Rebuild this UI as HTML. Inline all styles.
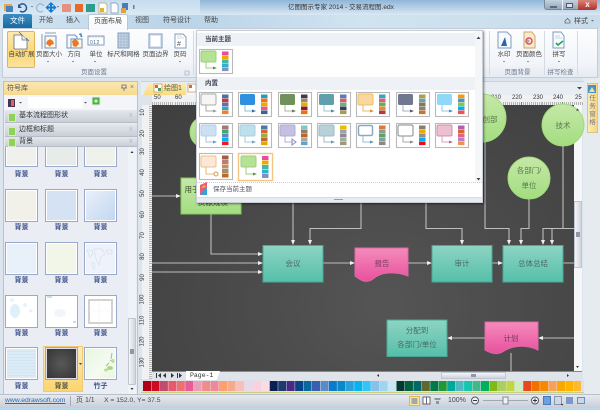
<!DOCTYPE html>
<html lang="zh">
<head>
<meta charset="utf-8">
<title>亿图图示专家 2014</title>
<style>
html,body{margin:0;padding:0;width:600px;height:410px;overflow:hidden;background:#d9e3ee}
#r{position:relative;width:600px;height:410px;overflow:hidden;font-family:"Liberation Sans","Noto Sans CJK SC",sans-serif;font-size:7px;color:#444;filter:blur(.35px)}
#r div,#r span.a{position:absolute;box-sizing:border-box}
.t{white-space:nowrap;line-height:9px;text-align:center}
.lb{color:#3f5288;font-size:7px;width:33px;text-align:center;line-height:9px;white-space:nowrap;font-weight:bold}
.th{width:33px;height:33px;border:1px solid #9aa9c9;box-shadow:inset 0 0 0 1px #fff}
.gb{left:5px;width:132px;height:13px;background:linear-gradient(#e4e7ec,#c9ced8);border-bottom:1px solid #b5bcc8;line-height:12px;padding-left:14px;font-size:7px;color:#333;white-space:nowrap}
.gb i{position:absolute;left:3px;top:3px;width:6px;height:7px;background:#8ed25a;border:1px solid #d8e8c8}
.gb b{position:absolute;left:124px;top:0;color:#b4bac4;font-weight:normal}
.hd{left:197px;width:278px;height:13px;background:#eef1f5;line-height:13px;padding-left:8px;font-size:6.500px;color:#445;font-weight:bold}
svg{position:absolute;left:0;top:0}
svg text{font-family:"Liberation Sans","Noto Sans CJK SC",sans-serif}
</style>
</head>
<body>
<div id="r">
<!-- window chrome -->
<div style="left:0;top:0;width:600px;height:28px;background:linear-gradient(90deg,#d4e5f3 0,#b9d3e8 30%,#d0e3f0 60%,#c9dcec 100%)"></div>
<div style="left:200px;top:0;width:400px;height:15px;background:linear-gradient(#8fb6d8,#dbe9f4)"></div>
<div style="left:0;top:0;width:200px;height:15px;background:linear-gradient(#c6dcee,#dbe9f4)"></div>
<div class="t" style="left:288px;top:3px;color:#333;font-size:6.500px">亿图图示专家 2014 - 交易流程图.edx</div>
<div style="left:544px;top:0;width:53px;height:10px;border-radius:0 0 3px 3px;background:linear-gradient(#c4d2de,#93a8b9);border:1px solid #77899a;border-top:0"></div>
<div style="left:562px;top:0;width:1px;height:10px;background:#eef"></div>
<div style="left:578px;top:0;width:19px;height:10px;border-radius:0 0 3px 0;background:linear-gradient(#d9847a,#b03028)"></div>
<div style="left:550px;top:6px;width:7px;height:2px;background:#eef;border:1px solid #667"></div>
<div style="left:566px;top:3px;width:7px;height:5px;border:1px solid #556;background:#dde"></div>
<div class="t" style="left:578px;top:0;width:19px;color:#fff;font-weight:bold;font-size:8px">x</div>
<!-- qat icons -->
<svg width="600" height="410" style="z-index:1">
<rect x="4" y="4" width="8" height="7" fill="#e8a848"/><rect x="6" y="6" width="7" height="6" fill="#4a80c0"/>
<path d="M19 6a4 4 0 1 1 1 5" fill="none" stroke="#2a5a98" stroke-width="1.600"/><path d="M18 4v4h4z" fill="#2a5a98"/>
<path d="M31 6l2 0-1 1.500z" fill="#667"/>
<path d="M44 6a4 4 0 1 0-1 5" fill="none" stroke="#a8bccf" stroke-width="1.500"/>
<path d="M51 4l3 3h-2v1.500h1.500V6.500l3 3-3 3V10.500H52V12h2l-3 3-3-3h2v-1.500H48.500v2l-3-3 3-3v2H50V7h-2z" fill="#1878c8" transform="translate(0,-2)"/>
<path d="M57 6l2 0-1 1.500z" fill="#667"/>
<rect x="62" y="4" width="9" height="8" fill="#e89080"/><rect x="75" y="4" width="8" height="8" fill="#e86828"/><rect x="86" y="4" width="9" height="8" fill="#2f9b8c"/>
<path d="M99 3h6l2 2v8h-8z" fill="#fff" stroke="#b8a060" stroke-width=".7"/><rect x="100" y="8" width="4" height="4" fill="#e8b030"/>
<path d="M111 3h5l2 2v8h-7z" fill="#fff" stroke="#7090b8" stroke-width=".7"/>
<path d="M122 3h6v7h-6z" fill="#4080c0"/><path d="M121 8h5v5h-5z" fill="#e8a030"/>
<rect x="133" y="5" width="1.500" height="4" fill="#778"/>
</svg>
<!-- tabs -->
<div style="left:3px;top:14px;width:29px;height:14px;background:linear-gradient(#3a8ec4,#1a6aa0);border-radius:2px 2px 0 0;color:#fff;text-align:center;line-height:13px;font-size:7.500px">文件</div>
<div class="t" style="left:39px;top:16px">开始</div>
<div class="t" style="left:66px;top:16px">插入</div>
<div style="left:88px;top:14px;width:40px;height:16px;background:linear-gradient(#fff,#f6f8fb);border:1px solid #b9c6d4;border-bottom:0;border-radius:2px 2px 0 0;z-index:2;text-align:center;line-height:14px;color:#444">页面布局</div>
<div class="t" style="left:135px;top:16px">视图</div>
<div class="t" style="left:163px;top:16px">符号设计</div>
<div class="t" style="left:204px;top:16px">帮助</div>
<div class="t" style="left:574px;top:17px">样式</div>
<svg width="600" height="410" style="z-index:2"><path d="M565 21l2.500-2.500 2.500 2.500v2h-5z" fill="none" stroke="#667" stroke-width=".8"/><path d="M591 20h3l-1.500 1.500z" fill="#667"/></svg>
<!-- ribbon -->
<div style="left:2px;top:28px;width:596px;height:50px;background:linear-gradient(#fdfdfe,#f2f5f9 70%,#e6ebf1);border:1px solid #c4ced9"></div>
<div style="left:7px;top:31px;width:28px;height:37px;background:linear-gradient(#fde9ae,#fcd677 60%,#fbe39c);border:1px solid #dcb45a;border-radius:2px"></div>
<div class="t" style="left:8px;top:50px;width:27px;font-size:6.500px">自动扩展</div>
<div class="t" style="left:35px;top:50px;width:28px;font-size:6.500px">页面大小</div>
<div class="t" style="left:66px;top:50px;width:16px;font-size:6.500px">方向</div>
<div class="t" style="left:88px;top:50px;width:16px;font-size:6.500px">单位</div>
<div class="t" style="left:107px;top:50px;width:33px;font-size:6.500px">标尺和网格</div>
<div class="t" style="left:142px;top:50px;width:27px;font-size:6.500px">页面边界</div>
<div class="t" style="left:172px;top:50px;width:16px;font-size:6.500px">页码</div>
<div class="t" style="left:81px;top:68px;width:26px;font-size:6.500px;color:#6b7b8f">页面设置</div>
<div class="t" style="left:496px;top:50px;width:16px;font-size:6.500px">水印</div>
<div class="t" style="left:515px;top:50px;width:28px;font-size:6.500px">页面颜色</div>
<div class="t" style="left:551px;top:50px;width:16px;font-size:6.500px">拼写</div>
<div class="t" style="left:504px;top:68px;width:27px;font-size:6.500px;color:#6b7b8f">页面背景</div>
<div class="t" style="left:547px;top:68px;width:27px;font-size:6.500px;color:#6b7b8f">拼写检查</div>
<div style="left:193px;top:31px;width:1px;height:44px;background:#d5dbe3"></div>
<div style="left:489px;top:31px;width:1px;height:44px;background:#d5dbe3"></div>
<div style="left:544px;top:31px;width:1px;height:44px;background:#d5dbe3"></div>
<div style="left:577px;top:31px;width:1px;height:44px;background:#d5dbe3"></div>
<svg width="600" height="410" style="z-index:2">
<!-- auto expand -->
<path d="M14 35h8l5 5v9h-13z" fill="#fff" stroke="#606c7c" stroke-width=".8"/><path d="M22 35v5h5" fill="#e8eef4" stroke="#606c7c" stroke-width=".7"/><path d="M19 32l3 3M26 38l3 3" stroke="#3c6aa0" stroke-width=".8"/>
<!-- page size -->
<path d="M45 36h11v12h-11z" fill="#fdf6ec" stroke="#6f93bd"/><path d="M47 41l3-2 3 2 1 3-3 1-1 2-2-2-2-1z" fill="#e8792a"/><path d="M42 34v15M45 33h11" stroke="#5f7fa8" stroke-width=".8"/>
<!-- orientation -->
<path d="M67 35h8l2 2v11h-10z" fill="#f5f8fc" stroke="#6f93bd"/><rect x="71" y="39" width="11" height="9" fill="#fdf3e6" stroke="#6f93bd"/><path d="M72 41l3-2 3 2 1 3-3 3-3-1z" fill="#e8792a"/><path d="M79 34a4 4 0 0 1 3 3M81 33v4" stroke="#4078b0" fill="none"/>
<!-- unit -->
<rect x="88" y="36" width="16" height="9" fill="#fff" stroke="#7f9cbf"/><path d="M90 36v2M93 36v2M96 36v2M99 36v2M102 36v2" stroke="#7f9cbf" stroke-width=".6"/>
<text x="90" y="44" font-size="5" fill="#46668c" letter-spacing=".5">012</text>
<!-- grid -->
<rect x="118" y="33" width="11" height="15" fill="#c8d6e6" stroke="#7f9cbf"/><path d="M118 36h11M118 39h11M118 42h11M118 45h11M121 33v15M124 33v15M127 33v15" stroke="#8fa8c4" stroke-width=".5"/>
<!-- border -->
<rect x="149" y="34" width="13" height="14" fill="#dbe6f2" stroke="#7f9cbf"/><rect x="151" y="36" width="9" height="10" fill="#fff"/>
<!-- page no -->
<path d="M175 34h8l3 3v11h-11z" fill="#fff" stroke="#7f9cbf"/><path d="M177 36h5M177 38h7" stroke="#a8b8cc" stroke-width=".6"/><text x="177" y="46" font-size="7" fill="#456">#</text>
<!-- arrows -->
<path d="M47 61h2l-1 1.200zM72 61h2l-1 1.200zM94 61h2l-1 1.200zM179 61h2l-1 1.200zM503 61h2l-1 1.200zM527 61h2l-1 1.200zM558 61h2l-1 1.200z" fill="#555"/>
<path d="M185 71h4v4h-4z" fill="none" stroke="#93a0b0" stroke-width=".6"/>
<!-- watermark -->
<path d="M498 32h9l4 4v12h-13z" fill="#f7fafd" stroke="#7f9cbf"/><path d="M501 46l4-9 2 9z" fill="#2d62b0"/>
<!-- page color -->
<path d="M524 32h8l3 4v12h-11z" fill="#fde9c8" stroke="#c8a878"/><circle cx="529" cy="41" r="3" fill="none" stroke="#d8506a" stroke-width="1.500"/><circle cx="528" cy="41" r="1.500" fill="#a0a8b0"/>
<!-- spell -->
<path d="M553 32h8l3 4v12h-11z" fill="#f7fafd" stroke="#7f9cbf"/><path d="M556 43l2 2 5-4" fill="none" stroke="#18a858" stroke-width="1.600"/><path d="M555 36h5M555 38h7" stroke="#a0b0c0" stroke-width=".6"/>
</svg>
<!-- base band -->
<div style="left:0;top:78px;width:600px;height:320px;background:#dce5ee"></div>
<div style="left:583px;top:78px;width:17px;height:320px;background:#e6ebf0"></div>
<!-- left panel -->
<div style="left:3px;top:81px;width:135px;height:316px;background:#e9ecf2;border:1px solid #b7c3d0"></div>
<div style="left:4px;top:82px;width:133px;height:13px;background:linear-gradient(#fbe6ae,#f5d98f);padding-left:3px;line-height:13px;color:#555">符号库</div>
<div class="t" style="left:130px;top:83px;color:#778">×</div>
<div style="left:4px;top:95px;width:133px;height:15px;background:#f3f5f8"></div>
<div style="left:28px;top:97px;width:55px;height:11px;background:#fff"></div>
<svg width="600" height="410" style="z-index:2">
<path d="M122 85h4v3h-4zM121 88h6M124 88v3" fill="none" stroke="#667" stroke-width=".8"/>
<rect x="8" y="99" width="7" height="8" fill="#443355"/><rect x="11" y="100" width="3" height="6" fill="#e06060"/><path d="M19 102h3l-1.500 1.500zM84 102h3l-1.500 1.500z" fill="#556"/>
<rect x="92" y="97" width="8" height="8" fill="#4ab040" stroke="#e8f0e0"/><path d="M96 99v4M94 101h4" stroke="#fff"/>
</svg>
<div class="gb" style="top:110px"><i></i>基本流程图形状<b>x</b></div>
<div class="gb" style="top:124px"><i></i>边框和标题<b>x</b></div>
<div class="gb" style="top:137px;height:10px;line-height:9px"><i style="top:1px"></i>背景<b>x</b></div>
<!-- symbol thumbs -->
<div style="left:5px;top:147px;width:122px;height:249px;background:#eaedf3;overflow:hidden"></div>
<div class="th" style="left:5px;top:134px;background:#f0f0ec;clip-path:inset(13px -2px -2px -2px)"></div>
<div class="th" style="left:45px;top:134px;background:#e8ece8;clip-path:inset(13px -2px -2px -2px)"></div>
<div class="th" style="left:84px;top:134px;background:#eef2ea;clip-path:inset(13px -2px -2px -2px)"></div>
<div class="lb" style="left:5px;top:170px">背景</div><div class="lb" style="left:45px;top:170px">背景</div><div class="lb" style="left:84px;top:170px">背景</div>
<div class="th" style="left:5px;top:189px;background:#f1f1ea"></div>
<div class="th" style="left:45px;top:189px;background:#d4e2f4"></div>
<div class="th" style="left:84px;top:189px;background:linear-gradient(135deg,#eaf0fa,#c2d7f0)"></div>
<div class="lb" style="left:5px;top:223px">背景</div><div class="lb" style="left:45px;top:223px">背景</div><div class="lb" style="left:84px;top:223px">背景</div>
<div class="th" style="left:5px;top:242px;background:#e8f0fa"></div>
<div class="th" style="left:45px;top:242px;background:#f2f6e8"></div>
<div class="th" style="left:84px;top:242px;background:#eef2fa"></div>
<div class="lb" style="left:5px;top:276px">背景</div><div class="lb" style="left:45px;top:276px">背景</div><div class="lb" style="left:84px;top:276px">背景</div>
<div class="th" style="left:5px;top:295px;background:#fff"></div>
<div class="th" style="left:45px;top:295px;background:#fff"></div>
<div class="th" style="left:84px;top:295px;background:#fff"></div>
<div style="left:88px;top:299px;width:25px;height:25px;border:2px solid #d2d2d2"></div>
<div class="lb" style="left:5px;top:329px">背景</div><div class="lb" style="left:45px;top:329px">背景</div><div class="lb" style="left:84px;top:329px">背景</div>
<div style="left:43px;top:346px;width:40px;height:46px;background:linear-gradient(#fdebb4,#fbd56f);border:1px solid #eecb70"></div>
<div class="th" style="left:5px;top:347px;background:repeating-linear-gradient(0deg,#d2e5f3 0 1px,#dcecf7 1px 3px)"></div>
<div class="th" style="left:45px;top:347px;background:radial-gradient(#585858,#333);box-shadow:inset 0 0 0 1px #dde"></div>
<div class="th" style="left:84px;top:347px;background:linear-gradient(135deg,#e6f6df,#f4fbf0 60%,#e6f6df)"></div>
<div class="lb" style="left:5px;top:382px">背景</div><div class="lb" style="left:45px;top:382px;color:#554">背景</div><div class="lb" style="left:84px;top:382px">竹子</div>
<svg width="600" height="410" style="z-index:2">
<path d="M112 353l-1 6M110 360l3 2M109 363l-3 3" stroke="#a8b898" stroke-width="1" fill="none"/>
<ellipse cx="110" cy="368" rx="3" ry="2" fill="#a8d880"/><ellipse cx="113" cy="361" rx="1.500" ry="2" fill="#b8e090"/><ellipse cx="106" cy="370" rx="2" ry="1.500" fill="#b8e090"/>
<ellipse cx="15" cy="311" rx="5" ry="7" fill="#e0f0fa"/><circle cx="25" cy="305" r="2" fill="#e6f3fb"/><circle cx="31" cy="311" r="1.500" fill="#e0f0fa"/><circle cx="12" cy="300" r="2" fill="#e8f4fb"/>
<ellipse cx="60" cy="313" rx="6" ry="4" fill="#f2f6fb"/><path d="M47 297h5M73 322h3" stroke="#c8e0f0" stroke-width="2"/>
<path d="M87 250h5l1 4-3 3zM94 249h8l3 5-4 3-2 8-3-6zM106 250h6v4h-4zM92 262l3 2-1 5-2-3z" fill="none" stroke="#d8dfee" stroke-width=".7"/>
<path d="M99 296v31M85 311h31" stroke="#e8e8e8" stroke-dasharray="1 1" stroke-width=".6"/>
<path d="M79 363h3l-1.500 2z" fill="#445"/>
</svg>
<!-- left scroll -->
<div style="left:128px;top:147px;width:8px;height:249px;background:#eff2f6"></div>
<div style="left:128px;top:318px;width:8px;height:67px;background:linear-gradient(90deg,#f5f6f8,#cfd4dc);border:1px solid #c0c6d0;border-radius:1px"></div>
<div style="left:130px;top:349px;width:4px;height:5px;background:#8f98a6"></div>
<svg width="600" height="410" style="z-index:2"><path d="M130.500 153l1.500-2 1.500 2zM130.500 388l1.500 2 1.500-2z" fill="#333"/></svg>
<!-- canvas tabs -->
<div style="left:141px;top:81px;width:443px;height:14px;background:#e8edf3;border-top:1px solid #c8d1dc"></div>
<div style="left:143px;top:83px;width:43px;height:12px;background:linear-gradient(#fdebb0,#f9dc84);clip-path:polygon(6px 0,100% 0,100% 100%,0 100%);"></div>
<div class="t" style="left:164px;top:84px;color:#554;font-size:7px">绘图1</div>
<div style="left:186px;top:83px;width:12px;height:12px;background:#f4f6f9;clip-path:polygon(5px 0,100% 0,100% 100%,0 100%)"></div>
<svg width="600" height="410" style="z-index:2">
<rect x="154" y="84" width="8" height="8" fill="#fff" stroke="#d09040" stroke-width=".7"/><rect x="155" y="85" width="3" height="3" fill="#e06040"/><rect x="158" y="88" width="3" height="3" fill="#40a060"/>
<rect x="188" y="84" width="8" height="8" fill="#fff" stroke="#d09040" stroke-width=".7"/><rect x="189" y="85" width="3" height="3" fill="#e06040"/>
<path d="M577 87h5l-2.500 2.500z" fill="#445"/>
</svg>
<!-- rulers -->
<div style="left:142px;top:95px;width:441px;height:10px;background:repeating-linear-gradient(90deg,#777 0 .5px,#f0f1f3 .5px 2.050px);background-size:100% 3px;background-repeat:repeat-x;background-position:0 bottom;background-color:#f0f1f3"></div>
<div style="left:142px;top:95px;width:10px;height:10px;background:#dfe3ea"></div>
<div style="left:142px;top:105px;width:10px;height:274px;background:repeating-linear-gradient(0deg,#777 0 .5px,#f0f1f3 .5px 2.050px);background-size:3px 100%;background-repeat:repeat-y;background-position:right 0;background-color:#f0f1f3"></div>
<div class="t" style="left:154px;top:94px;font-size:6px;color:#333">50</div>
<div class="t" style="left:175px;top:94px;font-size:6px;color:#333">60</div>
<div class="t" style="left:491px;top:94px;font-size:6px;color:#333">210</div>
<div class="t" style="left:512px;top:94px;font-size:6px;color:#333">220</div>
<div class="t" style="left:533px;top:94px;font-size:6px;color:#333">230</div>
<div class="t" style="left:553px;top:94px;font-size:6px;color:#333">240</div>
<div class="t" style="left:575px;top:94px;font-size:6px;color:#333">25</div>
<div class="t" style="left:140px;top:108px;font-size:6px;color:#333;transform:rotate(-90deg)">10</div>
<div class="t" style="left:140px;top:129px;font-size:6px;color:#333;transform:rotate(-90deg)">20</div>
<div class="t" style="left:140px;top:147px;font-size:6px;color:#333;transform:rotate(-90deg)">30</div>
<div class="t" style="left:140px;top:168px;font-size:6px;color:#333;transform:rotate(-90deg)">40</div>
<div class="t" style="left:140px;top:189px;font-size:6px;color:#333;transform:rotate(-90deg)">50</div>
<div class="t" style="left:140px;top:210px;font-size:6px;color:#333;transform:rotate(-90deg)">60</div>
<div class="t" style="left:140px;top:231px;font-size:6px;color:#333;transform:rotate(-90deg)">70</div>
<div class="t" style="left:140px;top:252px;font-size:6px;color:#333;transform:rotate(-90deg)">80</div>
<div class="t" style="left:140px;top:273px;font-size:6px;color:#333;transform:rotate(-90deg)">90</div>
<div class="t" style="left:138px;top:295px;font-size:6px;color:#333;transform:rotate(-90deg)">100</div>
<div class="t" style="left:138px;top:316px;font-size:6px;color:#333;transform:rotate(-90deg)">110</div>
<div class="t" style="left:138px;top:337px;font-size:6px;color:#333;transform:rotate(-90deg)">120</div>
<div class="t" style="left:138px;top:358px;font-size:6px;color:#333;transform:rotate(-90deg)">130</div>
<!-- canvas -->
<div style="left:152px;top:105px;width:422px;height:266px;background:radial-gradient(ellipse at 55% 75%,#555 0,#4a4a4a 45%,#3f3f3f 100%)"></div>
<svg width="600" height="410" style="z-index:3">
<defs>
<linearGradient id="g1" x1="0" y1="0" x2="0" y2="1"><stop offset="0" stop-color="#8ed4c4"/><stop offset="1" stop-color="#55bfa9"/></linearGradient>
<linearGradient id="g2" x1="0" y1="0" x2="0" y2="1"><stop offset="0" stop-color="#f48bbb"/><stop offset="1" stop-color="#e8519e"/></linearGradient>
<linearGradient id="g3" x1="0" y1="0" x2="0" y2="1"><stop offset="0" stop-color="#c5e8a8"/><stop offset="1" stop-color="#a3dd80"/></linearGradient>
</defs>
<g fill="none" stroke="#bdbdbd" stroke-width="1.100">
<path d="M152 196H176M152 263H258M152 272H258M211 214V254H258"/>
<path d="M293 202V240M361 202V228.500H310V240"/>
<path d="M323 263H350M408 263H427M492 263H498M563 263H574"/>
<path d="M426 202V228.500H462V240"/>
<path d="M485 140V228.500H509V240M529 199V228.500H521V240"/>
<path d="M574 228.500H543V240M552 228.500V240M563 146V228.500"/>
<path d="M574 338H543M485 338H452M511 353V371"/>
</g>
<g fill="#eee">
<path d="M176 194l5 2-5 2zM258 252l5 2-5 2zM258 261l5 2-5 2zM258 270l5 2-5 2zM350 261l5 2-5 2zM427 261l5 2-5 2zM498 261l5 2-5 2z"/>
<path d="M291 240l2 5 2-5zM308 240l2 5 2-5zM460 240l2 5 2-5zM507 240l2 5 2-5zM519 240l2 5 2-5zM541 240l2 5 2-5zM550 240l2 5 2-5z"/>
<path d="M543 336l-5 2 5 2zM452 336l-5 2 5 2z"/>
</g>
<g stroke="#a0dc78"><circle cx="206" cy="132" r="16" fill="url(#g3)"/><circle cx="482" cy="118" r="24" fill="url(#g3)"/><circle cx="563" cy="125" r="21" fill="url(#g3)"/><circle cx="529" cy="178" r="21" fill="url(#g3)"/></g>
<rect x="181" y="178" width="60" height="36" fill="url(#g3)" stroke="#84c85c"/>
<g stroke="#4aa896"><rect x="263" y="245.500" width="60" height="36.500" fill="url(#g1)"/><rect x="432" y="245.500" width="60" height="36.500" fill="url(#g1)"/><rect x="503" y="245.500" width="60" height="36.500" fill="url(#g1)"/><rect x="387" y="320" width="60" height="36.500" fill="url(#g1)"/></g>
<g stroke="#df68a6"><path d="M355 248H408V276C395 271 380 272 373 279C366 284 360 280 355 276Z" fill="url(#g2)"/><path d="M485 322H538V350C525 344 512 346 504 351C497 356 490 353 485 350Z" fill="url(#g2)"/></g>
<g font-size="7.500" fill="#4a6a64" text-anchor="middle">
<text x="293" y="266">会议</text><text x="382" y="266" fill="#7a3a5c">报告</text><text x="462" y="266">审计</text><text x="533" y="266">总体总结</text>
<text x="417" y="333">分配到</text><text x="417" y="347">各部门/单位</text><text x="511" y="341" fill="#7a3a5c">计划</text>
</g>
<g font-size="7.500" fill="#5a7a4a" text-anchor="middle">
<text x="529" y="173">各部门/</text><text x="529" y="188">单位</text><text x="563" y="128">技术</text><text x="490" y="122">创部</text>
<text x="192" y="192" fill="#3a4a2a">用于</text><text x="213" y="205" fill="#3a4a2a">贡献规模</text>
</g>
</svg>
<!-- popup -->
<div style="left:196px;top:30px;width:287px;height:173px;background:#fff;border:1px solid #c9ced6;box-shadow:1px 1px 2px rgba(0,0,0,.5);z-index:4"></div>
<div style="z-index:5;left:0;top:0;width:600px;height:410px">
<div class="hd" style="top:33px">当前主题</div>
<div class="hd" style="top:77px">内置</div>
<div style="left:475px;top:31px;width:7px;height:158px;background:#f4f6f8"></div>
<div style="left:197px;top:182px;width:285px;height:14px;border-top:1px dotted #ccd;background:#fff;line-height:14px;padding-left:16px;color:#556;font-size:6.500px">保存当前主题</div>
<div style="left:197px;top:197px;width:285px;height:5px;background:#e8ebef;border-top:1px solid #d8dce2"></div>
<div style="left:334px;top:199px;width:9px;height:1px;background:#99a"></div>
<svg width="600" height="410">
<path d="M476.500 39l2-2.500 2 2.500zM476.500 178l2 2.500 2-2.500z" fill="#445"/>
<path d="M200 195v-10l7-3v13z" fill="#e85c7a"/><path d="M200 195l7-8v8z" fill="#38a0d8"/><path d="M201 188l3-3 2 2z" fill="#f0c020"/>
<defs>
<g id="f"><rect x=".5" y=".5" width="33" height="24" fill="#fff" stroke="#b9b9b9" stroke-width="1.100"/></g>
</defs>
<!-- current -->
<g transform="translate(199,49)"><use href="#f"/><rect x="2" y="2" width="15" height="11" rx="1.500" fill="#b6e296" stroke="#9cd07a"/><path d="M7 13v6h8" fill="none" stroke="#a0c880"/><path d="M14 17.500l4 1.500-4 1.500z" fill="#5a9a38"/><rect x="23" y="2.500" width="6.500" height="3.600" fill="#e84c9c"/><rect x="23" y="6.500" width="6.500" height="3.600" fill="#f0a800"/><rect x="23" y="10.500" width="6.500" height="3.600" fill="#40b8a8"/><rect x="23" y="14.500" width="6.500" height="3.600" fill="#30b0d0"/><rect x="23" y="18.500" width="6.500" height="3.600" fill="#8090c0"/></g>
<!-- row1 -->
<g transform="translate(199,92)"><use href="#f"/><rect x="2" y="2" width="15" height="11" rx="1.500" fill="#f6f6f6" stroke="#aaa"/><path d="M7 13v6h8" fill="none" stroke="#aaa"/><path d="M14 17.500l4 1.500-4 1.500z" fill="#999"/><rect x="23" y="2.500" width="6.500" height="3.600" fill="#4a70a8"/><rect x="23" y="6.500" width="6.500" height="3.600" fill="#b84040"/><rect x="23" y="10.500" width="6.500" height="3.600" fill="#8060a8"/><rect x="23" y="14.500" width="6.500" height="3.600" fill="#30a8c0"/><rect x="23" y="18.500" width="6.500" height="3.600" fill="#f08030"/></g>
<g transform="translate(238,92)"><use href="#f"/><rect x="2" y="2" width="15" height="11" rx="1.500" fill="#3090e0"/><path d="M7 13v6h8" fill="none" stroke="#90b8d8"/><path d="M14 17.500l4 1.500-4 1.500z" fill="#2070b0"/><rect x="23" y="2.500" width="6.500" height="3.600" fill="#20a0c0"/><rect x="23" y="6.500" width="6.500" height="3.600" fill="#f07020"/><rect x="23" y="10.500" width="6.500" height="3.600" fill="#f0a800"/><rect x="23" y="14.500" width="6.500" height="3.600" fill="#e06080"/><rect x="23" y="18.500" width="6.500" height="3.600" fill="#406090"/></g>
<g transform="translate(278,92)"><use href="#f"/><rect x="2" y="2" width="15" height="11" rx="1.500" fill="#70905c"/><path d="M7 13v6h8" fill="none" stroke="#a8b8a0"/><path d="M14 17.500l4 1.500-4 1.500z" fill="#607850"/><rect x="23" y="2.500" width="6.500" height="3.600" fill="#403858"/><rect x="23" y="6.500" width="6.500" height="3.600" fill="#a08860"/><rect x="23" y="10.500" width="6.500" height="3.600" fill="#e0b000"/><rect x="23" y="14.500" width="6.500" height="3.600" fill="#901828"/><rect x="23" y="18.500" width="6.500" height="3.600" fill="#f07000"/></g>
<g transform="translate(317,92)"><use href="#f"/><rect x="2" y="2" width="15" height="11" rx="1.500" fill="#60a0ac"/><path d="M7 13v6h8" fill="none" stroke="#a0c0c8"/><path d="M14 17.500l4 1.500-4 1.500z" fill="#508898"/><rect x="23" y="2.500" width="6.500" height="3.600" fill="#5080c0"/><rect x="23" y="6.500" width="6.500" height="3.600" fill="#e05868"/><rect x="23" y="10.500" width="6.500" height="3.600" fill="#70b070"/><rect x="23" y="14.500" width="6.500" height="3.600" fill="#384060"/><rect x="23" y="18.500" width="6.500" height="3.600" fill="#a0a050"/></g>
<g transform="translate(356,92)"><use href="#f"/><rect x="2" y="2" width="15" height="11" rx="1.500" fill="#f8d8a0" stroke="#f0c060"/><path d="M7 13v6h8" fill="none" stroke="#e8b860"/><path d="M14 17.500l4 1.500-4 1.500z" fill="#d89020"/><rect x="23" y="2.500" width="6.500" height="3.600" fill="#30a8c0"/><rect x="23" y="6.500" width="6.500" height="3.600" fill="#e06070"/><rect x="23" y="10.500" width="6.500" height="3.600" fill="#60b060"/><rect x="23" y="14.500" width="6.500" height="3.600" fill="#e09030"/><rect x="23" y="18.500" width="6.500" height="3.600" fill="#b83838"/></g>
<g transform="translate(396,92)"><use href="#f"/><rect x="2" y="2" width="15" height="11" rx="1.500" fill="#707890"/><path d="M7 13v6h8" fill="none" stroke="#a8acc0"/><path d="M14 17.500l4 1.500-4 1.500z" fill="#505870"/><rect x="23" y="2.500" width="6.500" height="3.600" fill="#b0a040"/><rect x="23" y="6.500" width="6.500" height="3.600" fill="#70a0a0"/><rect x="23" y="10.500" width="6.500" height="3.600" fill="#807868"/><rect x="23" y="14.500" width="6.500" height="3.600" fill="#908070"/><rect x="23" y="18.500" width="6.500" height="3.600" fill="#c07828"/></g>
<g transform="translate(435,92)"><use href="#f"/><rect x="2" y="2" width="15" height="11" rx="1.500" fill="#90d8f8"/><path d="M7 13v6h8" fill="none" stroke="#90c8e0"/><path d="M14 17.500l4 1.500-4 1.500z" fill="#4090b8"/><rect x="23" y="2.500" width="6.500" height="3.600" fill="#f0a000"/><rect x="23" y="6.500" width="6.500" height="3.600" fill="#5090d0"/><rect x="23" y="10.500" width="6.500" height="3.600" fill="#80c850"/><rect x="23" y="14.500" width="6.500" height="3.600" fill="#00b0f0"/><rect x="23" y="18.500" width="6.500" height="3.600" fill="#f05050"/></g>
<!-- row2 -->
<g transform="translate(199,123)"><use href="#f"/><rect x="2" y="2" width="15" height="11" rx="1.500" fill="#cce0f4" stroke="#b8d0e8"/><path d="M7 13v6h8" fill="none" stroke="#a8c4dc"/><path d="M14 17.500l4 1.500-4 1.500z" fill="#6898c0"/><rect x="23" y="2.500" width="6.500" height="3.600" fill="#a07878"/><rect x="23" y="6.500" width="6.500" height="3.600" fill="#40a870"/><rect x="23" y="10.500" width="6.500" height="3.600" fill="#6088c8"/><rect x="23" y="14.500" width="6.500" height="3.600" fill="#00b0f0"/><rect x="23" y="18.500" width="6.500" height="3.600" fill="#f01820"/></g>
<g transform="translate(238,123)"><use href="#f"/><rect x="2" y="2" width="15" height="11" rx="1.500" fill="#bce0ec" stroke="#a8d0dc"/><path d="M7 13v6h8" fill="none" stroke="#a8ccd8"/><path d="M14 17.500l4 1.500-4 1.500z" fill="#6aa8b8"/><rect x="23" y="2.500" width="6.500" height="3.600" fill="#4878b0"/><rect x="23" y="6.500" width="6.500" height="3.600" fill="#d06828"/><rect x="23" y="10.500" width="6.500" height="3.600" fill="#a0a848"/><rect x="23" y="14.500" width="6.500" height="3.600" fill="#c06828"/><rect x="23" y="18.500" width="6.500" height="3.600" fill="#e0a800"/></g>
<g transform="translate(278,123)"><use href="#f"/><rect x="2" y="2" width="15" height="11" rx="1.500" fill="#c4c0e4" stroke="#b0acd4"/><path d="M7 13v6h8" fill="none" stroke="#b0acd4"/><path d="M14 16l4 3-4 3z" fill="none" stroke="#9088c0"/><rect x="23" y="2.500" width="6.500" height="3.600" fill="#80c8c8"/><rect x="23" y="6.500" width="6.500" height="3.600" fill="#a07860"/><rect x="23" y="10.500" width="6.500" height="3.600" fill="#b06830"/><rect x="23" y="14.500" width="6.500" height="3.600" fill="#a8a8a0"/><rect x="23" y="18.500" width="6.500" height="3.600" fill="#60a0d0"/></g>
<g transform="translate(317,123)"><use href="#f"/><rect x="2" y="2" width="15" height="11" rx="1.500" fill="#b8d0d8" stroke="#a0bcc4"/><path d="M7 13v6h8" fill="none" stroke="#a0bcc4"/><path d="M14 17.500l4 1.500-4 1.500z" fill="#6898a8"/><rect x="23" y="2.500" width="6.500" height="3.600" fill="#e8c000"/><rect x="23" y="6.500" width="6.500" height="3.600" fill="#a0a0b0"/><rect x="23" y="10.500" width="6.500" height="3.600" fill="#908890"/><rect x="23" y="14.500" width="6.500" height="3.600" fill="#a0b0a0"/><rect x="23" y="18.500" width="6.500" height="3.600" fill="#a09878"/></g>
<g transform="translate(356,123)"><use href="#f"/><rect x="2.500" y="2.500" width="14" height="10" rx="1.500" fill="#fff" stroke="#88a8c8" stroke-width="1.500"/><path d="M7 13v6h8" fill="none" stroke="#a0b8d0"/><path d="M14 17.500l4 1.500-4 1.500z" fill="#6090b8"/><rect x="23" y="2.500" width="6.500" height="3.600" fill="#e07830"/><rect x="23" y="6.500" width="6.500" height="3.600" fill="#80a0a0"/><rect x="23" y="10.500" width="6.500" height="3.600" fill="#60a060"/><rect x="23" y="14.500" width="6.500" height="3.600" fill="#80a0a0"/><rect x="23" y="18.500" width="6.500" height="3.600" fill="#888"/></g>
<g transform="translate(396,123)"><use href="#f"/><rect x="2" y="2" width="15" height="11" rx="1.500" fill="#fff" stroke="#888"/><path d="M7 13v6h8" fill="none" stroke="#aaa"/><path d="M14 17.500l4 1.500-4 1.500z" fill="#888"/><rect x="23" y="2.500" width="6.500" height="3.600" fill="#808070"/><rect x="23" y="6.500" width="6.500" height="3.600" fill="#f0a800"/><rect x="23" y="10.500" width="6.500" height="3.600" fill="#909090"/><rect x="23" y="14.500" width="6.500" height="3.600" fill="#00b0f0"/><rect x="23" y="18.500" width="6.500" height="3.600" fill="#f00820"/></g>
<g transform="translate(435,123)"><use href="#f"/><rect x="2" y="2" width="15" height="11" rx="1.500" fill="#ecc0d0" stroke="#d090a8"/><path d="M7 13v6h8" fill="none" stroke="#d8a0b8"/><path d="M14 17.500l4 1.500-4 1.500z" fill="#c06088"/><rect x="23" y="2.500" width="6.500" height="3.600" fill="#b060b0"/><rect x="23" y="6.500" width="6.500" height="3.600" fill="#d86820"/><rect x="23" y="10.500" width="6.500" height="3.600" fill="#e06090"/><rect x="23" y="14.500" width="6.500" height="3.600" fill="#b880c0"/><rect x="23" y="18.500" width="6.500" height="3.600" fill="#f09050"/></g>
<!-- row3 -->
<g transform="translate(199,153)"><rect x=".5" y=".5" width="33" height="26" fill="#fff" stroke="#b9b9b9" stroke-width="1.100"/><rect x="2" y="3" width="15" height="11" rx="1.500" fill="#fce8d8" stroke="#f0c080"/><path d="M7 14v7h8" fill="none" stroke="#e8b870"/><circle cx="17" cy="21" r="2" fill="#fff" stroke="#d89848"/><rect x="23" y="2.500" width="6.500" height="4" fill="#a06040"/><rect x="23" y="7" width="6.500" height="4" fill="#b88070"/><rect x="23" y="11.500" width="6.500" height="4" fill="#c09060"/><rect x="23" y="16" width="6.500" height="4" fill="#a09070"/><rect x="23" y="20.500" width="6.500" height="4" fill="#c06820"/></g>
<g transform="translate(238,153)"><rect x=".5" y=".5" width="34" height="27" fill="#fff" stroke="#f3c483" stroke-width="1.400"/><rect x="3" y="3" width="15" height="11" rx="1.500" fill="#b6e296" stroke="#9cd07a"/><path d="M8 14v7h8" fill="none" stroke="#a0c880"/><path d="M15 19.500l4 1.500-4 1.500z" fill="#5a9a38"/><rect x="24" y="3" width="6.500" height="4" fill="#e84c9c"/><rect x="24" y="7.500" width="6.500" height="4" fill="#f0a800"/><rect x="24" y="12" width="6.500" height="4" fill="#40b8a8"/><rect x="24" y="16.500" width="6.500" height="4" fill="#30b0d0"/><rect x="24" y="21" width="6.500" height="4" fill="#8090c0"/></g>
</svg>
</div>
<!-- right scroll + side tab -->
<div style="left:574px;top:105px;width:8px;height:266px;background:#f6f7f9"></div>
<div style="left:574px;top:201px;width:8px;height:67px;background:linear-gradient(90deg,#f5f6f8,#cfd4dc);border:1px solid #c0c6d0"></div>
<div style="left:576px;top:232px;width:4px;height:5px;background:#8f98a6"></div>
<div style="left:587px;top:83px;width:11px;height:50px;background:linear-gradient(90deg,#fdebb2,#f8d77e);border:1px solid #d4c490"></div>
<div class="t" style="left:587px;top:95px;width:11px;font-size:6.500px;line-height:8px;white-space:normal;color:#778">任务窗格</div>
<svg width="600" height="410" style="z-index:3"><rect x="588" y="85" width="8" height="8" fill="#4a90c8"/><path d="M589 92l3-5 3 5z" fill="#f0e0a0"/><path d="M576 110.500l1.500-2 1.500 2zM576 366l1.500 2 1.500-2z" fill="#333"/></svg>
<!-- bottom tabs -->
<div style="left:152px;top:371px;width:430px;height:9px;background:#dfe3ea;border-top:1px solid #888;z-index:3"></div>
<div style="left:186px;top:371px;width:34px;height:9px;background:#fff;clip-path:polygon(0 0,100% 0,90% 100%,0 100%);z-index:3;line-height:9px;padding-left:4px;font-size:6.500px;color:#333;font-family:'Liberation Mono',monospace">Page-1</div>
<div style="left:441px;top:372px;width:65px;height:7px;background:linear-gradient(#f4f5f7,#cfd4dc);border:1px solid #c0c6d0;z-index:3"></div>
<div style="left:471px;top:374px;width:5px;height:3px;background:#8f98a6;z-index:3"></div>
<svg width="600" height="410" style="z-index:3">
<g fill="#333"><path d="M157 373v5h-1v-5zM161 373v5l-3-2.500zM166 373v5l-3-2.500zM171 373v5l3-2.500zM179 373v5l3-2.500zM178 373v5h-1v-5z"/><path d="M379 374v3l-2-1.500zM567 374v3l2-1.500z"/></g>
</svg>
<!-- palette -->
<div style="left:141px;top:380px;width:443px;height:13px;background:#dde2e8;border-bottom:1px solid #c8d080;z-index:3"></div>
<svg width="600" height="410" style="z-index:4">
<rect x="143" y="381" width="8" height="10" fill="#b00018"/><rect x="151.450" y="381" width="8" height="10" fill="#d00a22"/><rect x="159.900" y="381" width="8" height="10" fill="#c44b70"/><rect x="168.350" y="381" width="8" height="10" fill="#e85a6a"/><rect x="176.800" y="381" width="8" height="10" fill="#ee7070"/><rect x="185.250" y="381" width="8" height="10" fill="#e85c9a"/><rect x="193.700" y="381" width="8" height="10" fill="#e8a0b8"/><rect x="202.150" y="381" width="8" height="10" fill="#f28c8c"/><rect x="210.600" y="381" width="8" height="10" fill="#ee8a98"/><rect x="219.050" y="381" width="8" height="10" fill="#ff9e6e"/><rect x="227.500" y="381" width="8" height="10" fill="#f4ab8c"/><rect x="235.950" y="381" width="8" height="10" fill="#f8bfbc"/><rect x="244.400" y="381" width="8" height="10" fill="#e8d8e8"/><rect x="252.850" y="381" width="8" height="10" fill="#fbd0e0"/><rect x="261.300" y="381" width="8" height="10" fill="#fbdce4"/>
<rect x="269.750" y="381" width="8" height="10" fill="#0a2050"/><rect x="278.200" y="381" width="8" height="10" fill="#1e3a70"/><rect x="286.650" y="381" width="8" height="10" fill="#4a2a80"/><rect x="295.100" y="381" width="8" height="10" fill="#0a4488"/><rect x="303.550" y="381" width="8" height="10" fill="#0a68a0"/><rect x="312" y="381" width="8" height="10" fill="#3a5fb0"/><rect x="320.450" y="381" width="8" height="10" fill="#5b8ac8"/><rect x="328.900" y="381" width="8" height="10" fill="#0a7acc"/><rect x="337.350" y="381" width="8" height="10" fill="#0a88c8"/><rect x="345.800" y="381" width="8" height="10" fill="#2aa0dc"/><rect x="354.250" y="381" width="8" height="10" fill="#00b4f0"/><rect x="362.700" y="381" width="8" height="10" fill="#30c4f8"/><rect x="371.150" y="381" width="8" height="10" fill="#88c0e8"/><rect x="379.600" y="381" width="8" height="10" fill="#a0d4f0"/><rect x="388.050" y="381" width="8" height="10" fill="#c8e8f4"/>
<rect x="396.500" y="381" width="8" height="10" fill="#003a30"/><rect x="404.950" y="381" width="8" height="10" fill="#006040"/><rect x="413.400" y="381" width="8" height="10" fill="#006868"/><rect x="421.850" y="381" width="8" height="10" fill="#606830"/><rect x="430.300" y="381" width="8" height="10" fill="#007848"/><rect x="438.750" y="381" width="8" height="10" fill="#209838"/><rect x="447.200" y="381" width="8" height="10" fill="#00a898"/><rect x="455.650" y="381" width="8" height="10" fill="#50b8c0"/><rect x="464.100" y="381" width="8" height="10" fill="#10c8b0"/><rect x="472.550" y="381" width="8" height="10" fill="#40b888"/><rect x="481" y="381" width="8" height="10" fill="#00b060"/><rect x="489.450" y="381" width="8" height="10" fill="#80b818"/><rect x="497.900" y="381" width="8" height="10" fill="#a8d060"/><rect x="506.350" y="381" width="8" height="10" fill="#c0d840"/><rect x="514.800" y="381" width="8" height="10" fill="#d0ecc0"/>
<rect x="523.250" y="381" width="8" height="10" fill="#e84820"/><rect x="531.700" y="381" width="8" height="10" fill="#f07000"/><rect x="540.150" y="381" width="8" height="10" fill="#f88800"/><rect x="548.600" y="381" width="8" height="10" fill="#f8a058"/><rect x="557.050" y="381" width="8" height="10" fill="#f8a800"/><rect x="565.500" y="381" width="8" height="10" fill="#ffb400"/><rect x="573.950" y="381" width="7" height="10" fill="#ffb830"/>
</svg>
<!-- status bar -->
<div style="left:0;top:394px;width:600px;height:14px;background:linear-gradient(#e6eaef,#c8ced6);border-top:1px solid #b9c0ca;z-index:4"></div>
<div style="left:0;top:408px;width:600px;height:2px;background:#b7d8ee;z-index:4"></div>
<div class="t" style="left:5px;top:396px;color:#2a6ab8;text-decoration:underline;font-size:6.800px;z-index:5">www.edrawsoft.com</div>
<div style="left:70px;top:396px;width:1px;height:10px;background:#aab;z-index:5"></div>
<div class="t" style="left:76px;top:396px;font-size:7px;color:#445;z-index:5">页 1/1</div>
<div class="t" style="left:104px;top:396px;font-size:6.800px;color:#445;z-index:5">X = 152.0, Y= 37.5</div>
<div class="t" style="left:448px;top:396px;font-size:7px;color:#445;z-index:5">100%</div>
<svg width="600" height="410" style="z-index:5">
<rect x="409.500" y="396.500" width="10" height="9" fill="#fde59a" stroke="#eab840"/><rect x="411.500" y="398" width="6" height="6" fill="#a0a8b0"/>
<rect x="423" y="397" width="7" height="7" fill="#fff" stroke="#667"/><path d="M426.500 397v7" stroke="#667"/>
<path d="M434 398h7l-1 2h-5zM436 401h3v3h-3z" fill="#8896a6"/>
<circle cx="475" cy="400.500" r="3.500" fill="#f0f3f6" stroke="#556"/><path d="M473 400.500h4" stroke="#334"/>
<path d="M483 400.500h45" stroke="#a0a8b4"/><rect x="503" y="397" width="5" height="7" fill="#f0f2f5" stroke="#889"/>
<circle cx="535" cy="400.500" r="3.500" fill="#f0f3f6" stroke="#556"/><path d="M533 400.500h4M535 398.500v4" stroke="#334"/>
<rect x="543.500" y="396.500" width="7" height="8" fill="#6ea0e0" stroke="#4a7ac0"/>
<rect x="554.500" y="396.500" width="7" height="8" fill="#d0d8e4" stroke="#8a98ac"/><path d="M561 404l2 1" stroke="#334"/>
<rect x="566" y="397" width="7" height="7" fill="#7a98cc"/>
<rect x="577.500" y="397.500" width="7" height="6" fill="#c8d8ec" stroke="#6a90c0"/>
</svg>
</div>
</body>
</html>
